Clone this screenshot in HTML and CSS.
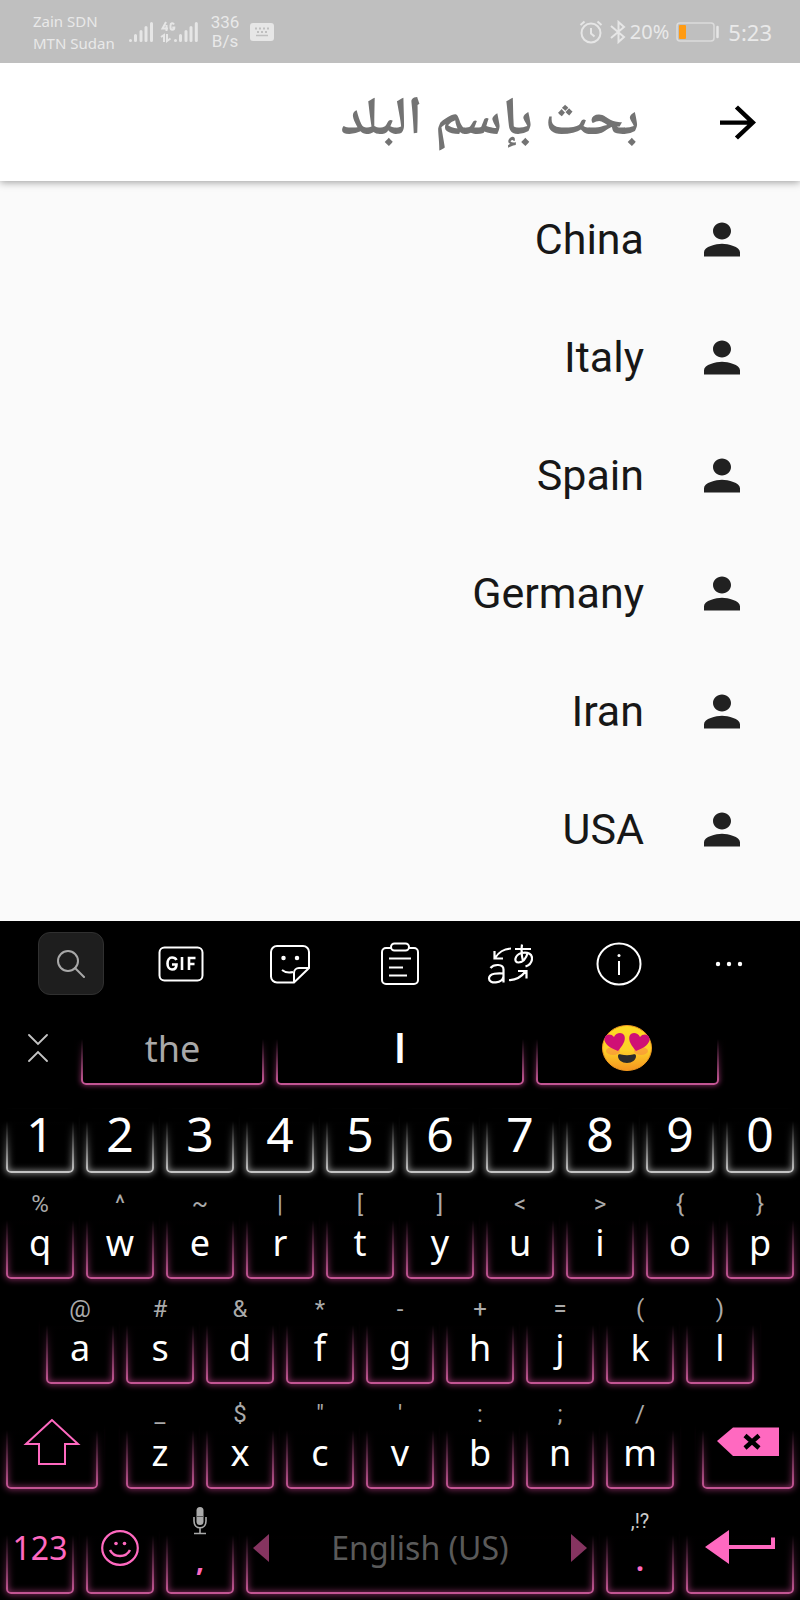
FILE: index.html
```html
<!DOCTYPE html>
<html lang="ar">
<head>
<meta charset="utf-8">
<meta name="viewport" content="width=device-width, initial-scale=1">
<title>بحث بإسم البلد</title>
<link rel="stylesheet" href="styles.css">
</head>
<body>
<svg class="defs" aria-hidden="true">
  <symbol id="person" viewBox="0 0 24 24" preserveAspectRatio="none"><path d="M12 12c2.21 0 4-1.79 4-4s-1.79-4-4-4-4 1.790-4 4 1.790 4 4 4zm0 2c-2.670 0-8 1.340-8 4v2h16v-2c0-2.660-5.330-4-8-4z"/></symbol>
</svg>
<div class="screen">
  <header class="status">
    <div class="carriers"><span>Zain SDN</span><span>MTN Sudan</span></div>
    <svg class="signals" width="70" height="24" viewBox="0 0 70 24" fill="none" stroke="#e6e6e6" stroke-width="3" stroke-linecap="round">
      <path d="M2.500 20.500v0M7.500 15.500v5M13 11.500v9M18 7.500v13M23.500 3.500v17M47.500 20.500v0M52.500 15.500v5M58 11.500v9M63 7.500v13M68.300 3.500v17"/>
      <path stroke-width="2" stroke-linecap="butt" d="M38 2l-3.500 6.500h5.500M38.500 5v6M46 4.500c-1-2-3.500-1.500-3.500 1v2c0 3 3.800 3 3.800 0h-2M33 17l3-2v7M39 14v7l3.500-2.500"/>
    </svg>
    <div class="speed"><span>336</span><span>B/s</span></div>
    <svg class="kbd" width="24" height="18" viewBox="0 0 24 18"><rect width="24" height="18" rx="3" fill="#e6e6e6"/><path d="M5 5.500h14M7 9h10" stroke="#bfbfbf" stroke-width="2" stroke-dasharray="2 2"/><path d="M6 12.500h12" stroke="#bfbfbf" stroke-width="1.500"/></svg>
    <div class="status-end">
      <svg width="24" height="24" viewBox="0 0 24 24" fill="none" stroke="#e6e6e6" stroke-width="2"><circle cx="12" cy="13" r="9.500"/><path d="M12 8v5.500l3.500 3M1.500 5l4-3.500M22.500 5l-4-3.500"/></svg>
      <svg class="bt" width="16" height="24" viewBox="0 0 16 24" fill="none" stroke="#e6e6e6" stroke-width="2"><path d="M1 6l13 11-5.500 5V2L14 7 1 18"/></svg>
      <span class="pct">20%</span>
      <svg class="battery" width="44" height="20" viewBox="0 0 44 20"><rect x="1" y="1" width="37" height="18" rx="3" fill="none" stroke="#dcdcdc" stroke-width="1.500"/><rect x="3" y="3" width="7" height="14" rx="1" fill="#ff9b13"/><path d="M41.500 5v10" stroke="#e6e6e6" stroke-width="2.500" stroke-linecap="round"/></svg>
      <span class="clock">5:23</span>
    </div>
  </header>

  <form class="appbar" dir="rtl" role="search">
    <button class="back" type="button" aria-label="رجوع"><svg class="icon" viewBox="0 0 24 24" preserveAspectRatio="none"><path d="M12 4l-1.410 1.410L16.170 11H4v2h12.170l-5.580 5.590L12 20l8-8z"/></svg></button>
    <input class="query" type="text" placeholder="بحث بإسم البلد" aria-label="بحث بإسم البلد">
  </form>

  <main class="results">
    <ul class="countries" dir="rtl">
      <li class="country"><svg class="icon"><use href="#person"/></svg><span>China</span></li>
      <li class="country"><svg class="icon"><use href="#person"/></svg><span>Italy</span></li>
      <li class="country"><svg class="icon"><use href="#person"/></svg><span>Spain</span></li>
      <li class="country"><svg class="icon"><use href="#person"/></svg><span>Germany</span></li>
      <li class="country"><svg class="icon"><use href="#person"/></svg><span>Iran</span></li>
      <li class="country"><svg class="icon"><use href="#person"/></svg><span>USA</span></li>
    </ul>
  </main>

  <section class="keyboard" lang="en" aria-label="Keyboard">
    <div class="tools">
      <button class="tool tool-search" type="button" aria-label="Search"><svg width="30" height="28" viewBox="0 0 30 28" fill="none" stroke="#a9a9a9" stroke-width="2" stroke-linecap="round"><circle cx="12" cy="11" r="10"/><path d="M19 18l9 9"/></svg></button>
      <button class="tool" type="button" aria-label="GIF"><svg width="46" height="36" viewBox="0 0 46 36" fill="none" stroke="#fff" stroke-width="2"><rect x="1.500" y="1.500" width="43" height="33" rx="5"/><path stroke-width="2.600" d="M18.500 14c-1-2-3-2.500-4.500-2.500-6 0-6 12 0 12 3 0 4.500-1.500 4.500-5h-4.500M24 11v13M31 24V12h6.500M31 18h5.500"/></svg></button>
      <button class="tool" type="button" aria-label="Stickers"><svg width="42" height="40" viewBox="0 0 42 40" fill="none" stroke="#fff" stroke-width="2"><path d="M25 38.500H8a6 6 0 0 1-6-6V8a6 6 0 0 1 6-6h26a6 6 0 0 1 6 6v16L25 38.500zM25 38V29a5 5 0 0 1 5-5h10M13 26c3 2.500 7 3 11 2"/><circle cx="14.500" cy="14" r="1.500" fill="#fff" stroke-width="1.500"/><circle cx="28" cy="14" r="1.500" fill="#fff" stroke-width="1.500"/></svg></button>
      <button class="tool" type="button" aria-label="Clipboard"><svg width="38" height="44" viewBox="0 0 38 44" fill="none" stroke="#fff" stroke-width="2"><path d="M10 6H5a4 4 0 0 0-4 4v28a4 4 0 0 0 4 4h28a4 4 0 0 0 4-4V10a4 4 0 0 0-4-4h-5"/><rect x="10" y="1.500" width="18" height="7" rx="3.500"/><path d="M8 16.500h22M8 25.500h14M8 33.500h18"/></svg></button>
      <button class="tool" type="button" aria-label="Translate"><svg width="46" height="42" viewBox="0 0 46 42" fill="none" stroke="#fff" stroke-width="2.200"><path d="M3.500 25c3-4 13-4.500 13 1.500v13M16.500 30.500c-5-.5-14.500-.5-14.500 5 0 6 13.500 5 14.500-2M7.500 8v7.500H16M8 15c4-6 8-9 16-9.500M22 37c8 .5 13-4 17-9M31 28h8.500v7.500M28 6h16M35 1.500c-1 7-.5 11 1 16.500M41 9c-2 7-6 10.500-9.500 10.500-5 0-4-7.500 3-9.500 6-1.500 11 1 10.500 6-.3 3.500-2.500 6-6.500 7.500"/></svg></button>
      <button class="tool" type="button" aria-label="Information"><svg width="46" height="44" viewBox="0 0 46 44" fill="none" stroke="#fff" stroke-width="2"><ellipse cx="23" cy="22" rx="21.500" ry="20.500"/><path d="M23 19v14"/><circle cx="23" cy="13.500" r="1.500" fill="#fff" stroke="none"/></svg></button>
      <button class="tool" type="button" aria-label="More"><svg width="28" height="8" viewBox="0 0 28 8" fill="#fff"><circle cx="3" cy="4" r="2.200"/><circle cx="14" cy="4" r="2.200"/><circle cx="25" cy="4" r="2.200"/></svg></button>
    </div>

    <div class="suggest">
      <button class="fold" type="button" aria-label="Collapse"><svg width="20" height="28" viewBox="0 0 20 28" fill="none" stroke="#c4c4c4" stroke-width="1.800" stroke-linecap="round"><path d="M1 1l9 9 9-9M1 27l9-9 9 9"/></svg></button>
      <button class="word" type="button">the</button>
      <button class="word word-main" type="button">I</button>
      <button class="word" type="button" aria-label="Heart eyes"><svg width="50" height="46" viewBox="0 0 50 46">
        <defs><linearGradient id="face" x1="0" y1="0" x2="0" y2="1"><stop offset="0" stop-color="#fdda24"/><stop offset=".55" stop-color="#fdd029"/><stop offset="1" stop-color="#f5941f"/></linearGradient></defs>
        <ellipse cx="25" cy="23" rx="24.500" ry="22.500" fill="url(#face)" stroke="#f29a20"/>
        <ellipse cx="11" cy="26" rx="7" ry="4" fill="#f8953a" opacity=".7"/><ellipse cx="39" cy="26" rx="7" ry="4" fill="#f8953a" opacity=".7"/>
        <path d="M16 26C8 23 2 19 2.500 13.500 3 9 9 8 12 12c2-5 9-5.500 10.500-1C24 16 20 21 16 26zM34 26c8-3 14-7 13.500-12.500C47 9 41 8 38 12c-2-5-9-5.500-10.500-1C26 16 30 21 34 26z" fill="#cf1075"/>
        <path d="M16 31c0-2 1.500-2 3-1.500 4 1 8 1 12 0 1.500-.5 3-.5 3 1.500 0 4-4 7-9 7s-9-3-9-7z" fill="#2b2b2b"/>
      </svg></button>
    </div>

    <div class="row row-digits">
      <button class="key" type="button">1</button><button class="key" type="button">2</button><button class="key" type="button">3</button><button class="key" type="button">4</button><button class="key" type="button">5</button><button class="key" type="button">6</button><button class="key" type="button">7</button><button class="key" type="button">8</button><button class="key" type="button">9</button><button class="key" type="button">0</button>
    </div>
    <div class="row row-top">
      <button class="key" type="button"><small>%</small>q</button>
      <button class="key" type="button"><small>^</small>w</button>
      <button class="key" type="button"><small>~</small>e</button>
      <button class="key" type="button"><small>|</small>r</button>
      <button class="key" type="button"><small>[</small>t</button>
      <button class="key" type="button"><small>]</small>y</button>
      <button class="key" type="button"><small>&lt;</small>u</button>
      <button class="key" type="button"><small>&gt;</small>i</button>
      <button class="key" type="button"><small>{</small>o</button>
      <button class="key" type="button"><small>}</small>p</button>
    </div>
    <div class="row row-home">
      <span></span>
      <button class="key" type="button"><small>@</small>a</button>
      <button class="key" type="button"><small>#</small>s</button>
      <button class="key" type="button"><small>&amp;</small>d</button>
      <button class="key" type="button"><small>*</small>f</button>
      <button class="key" type="button"><small>-</small>g</button>
      <button class="key" type="button"><small>+</small>h</button>
      <button class="key" type="button"><small>=</small>j</button>
      <button class="key" type="button"><small>(</small>k</button>
      <button class="key" type="button"><small>)</small>l</button>
    </div>
    <div class="row row-low">
      <button class="key key-art key-shift" type="button" aria-label="Shift"><svg width="58" height="48" viewBox="0 0 58 48" fill="none" stroke="#ff69c0" stroke-width="2"><path d="M29 2L3 26h13v20h26V26h13z"/></svg></button>
      <span></span>
      <button class="key" type="button"><small>_</small>z</button>
      <button class="key" type="button"><small>$</small>x</button>
      <button class="key" type="button"><small>"</small>c</button>
      <button class="key" type="button"><small>'</small>v</button>
      <button class="key" type="button"><small>:</small>b</button>
      <button class="key" type="button"><small>;</small>n</button>
      <button class="key" type="button"><small>/</small>m</button>
      <span></span>
      <button class="key key-art key-delete" type="button" aria-label="Backspace"><svg width="62" height="48" viewBox="0 0 62 48"><path d="M0 23L16 9.500h46v28.500H16z" fill="#ff69c0"/><path d="M28 17.500l14 12.500M42 17.500L28 30" stroke="#000" stroke-width="4.500"/></svg></button>
    </div>
    <div class="row row-space">
      <button class="key key-pink key-art" type="button">123</button>
      <button class="key key-art" type="button" aria-label="Emoji"><svg width="38" height="36" viewBox="0 0 38 36" fill="none" stroke="#ff69c0" stroke-width="2.200"><ellipse cx="19" cy="18" rx="17.800" ry="16.800"/><path d="M9 20c4 8 16 8 20 0" stroke-width="2.500"/><circle cx="15" cy="13.500" r="1.800" fill="#ff69c0" stroke="none"/><circle cx="23.500" cy="13.500" r="1.800" fill="#ff69c0" stroke="none"/></svg></button>
      <button class="key key-punct" type="button"><svg width="14" height="28" viewBox="0 0 14 28" aria-label="Voice"><rect x="3.500" y="0" width="7" height="18" rx="3.500" fill="#aaa"/><path d="M1 10v4c0 9 12 9 12 0v-4M7 21v5M1 26.500h12" fill="none" stroke="#aaa" stroke-width="1.600"/><path d="M3.500 9.500h7" stroke="#555"/></svg><b>,</b></button>
      <button class="key key-space" type="button"><svg width="16" height="28" viewBox="0 0 16 28"><path d="M16 0v28L0 14z" fill="#853460"/></svg><span>English (US)</span><svg width="16" height="28" viewBox="0 0 16 28"><path d="M0 0v28l16-14z" fill="#853460"/></svg></button>
      <button class="key key-punct" type="button"><small>,!?</small><b>.</b></button>
      <button class="key key-art key-enter" type="button" aria-label="Enter"><svg width="70" height="34" viewBox="0 0 70 34"><path d="M0 17L24 0v15h42V7.500h4V19H24v15z" fill="#ff69c0"/></svg></button>
    </div>
  </section>
</div>
</body>
</html>
```

FILE: styles.css
```css
* { box-sizing: border-box; }
body { margin: 0; background: #fafafa; font-family: Roboto, "Liberation Sans", sans-serif; }
button, input { font: inherit; color: inherit; border: 0; padding: 0; margin: 0; background: none; }
svg { display: block; flex: none; }
.defs { position: absolute; width: 0; height: 0; }
.screen { min-height: 100vh; display: flex; flex-direction: column; }
.icon { width: 54px; height: 51px; fill: #212121; }

/* Status bar */
.status { position: relative; z-index: 1; display: flex; align-items: center; height: 63px; padding: 0 28px 0 33px; background: #bfbfbf; color: #e9e9e9; }
.carriers { width: 95px; display: flex; flex-direction: column; padding-top: 1px; font: 15px/22px "Noto Sans", sans-serif; white-space: nowrap; }
.speed { margin-left: 12px; width: 30px; font-size: 17px; line-height: 19px; text-align: center; }
.speed span { display: block; }
.kbd { margin-left: 10px; }
.status-end { margin-left: auto; display: flex; align-items: center; font: 22px/30px "Noto Sans", sans-serif; }
.bt { margin: 0 4px 0 7px; }
.battery { margin: 0 8px 0 7px; }
.pct { font-size: 20px; }

/* Search bar */
.appbar { position: relative; display: flex; align-items: center; height: 118px; padding: 0 35px; background: #fff; box-shadow: 0 1px 8px rgba(0, 0, 0, .4); }
.back .icon { fill: #000; }
.query { flex: 1; min-width: 0; height: 80px; margin-right: 72px; font: 700 54px/80px "Noto Naskh Arabic", "DejaVu Sans", sans-serif; outline: 0; }
.query::placeholder { color: #737373; opacity: 1; }

/* Country list */
.results { flex: 1; }
.countries { list-style: none; margin: 0; padding: 0; }
.country { display: flex; align-items: center; gap: 51px; height: 118px; padding: 0 51px 2px; font-size: 43px; color: #171717; }

/* Keyboard */
.keyboard { background: #000; color: #fff; font-family: "Noto Sans", sans-serif; }
.tools { display: grid; grid-template-columns: repeat(7, 1fr); align-items: center; height: 85px; padding: 0 16px; }
.tool { display: flex; align-items: center; justify-content: center; justify-self: center; width: 66px; height: 63px; }
.tool-search { background: #1e1e1e; border: 1px solid #303030; border-radius: 12px; }
.suggest { display: grid; grid-template-columns: 75px 195fr 259fr 195fr; height: 84px; padding-right: 75px; }
.fold { display: flex; align-items: center; justify-content: center; }
.word { display: flex; align-items: center; justify-content: center; font-size: 36px; color: #a9a9a9; }
.word-main { font: 500 42px Roboto, sans-serif; color: #fff; }

.row { display: grid; height: 105px; }
.row-digits { grid-template-columns: repeat(10, 1fr); height: 90px; }
.row-top { grid-template-columns: repeat(10, 1fr); }
.row-home { grid-template-columns: 40fr repeat(9, 80fr) 40fr; }
.row-low { grid-template-columns: 104fr 16fr repeat(7, 80fr) 16fr 104fr; }
.row-space { grid-template-columns: repeat(3, 80fr) 360fr 80fr 120fr; }

.key { display: flex; flex-direction: column; align-items: center; padding-top: 10px; font-size: 36px; line-height: 50px; min-width: 0; }
.key small { font-family: Roboto, sans-serif; font-size: 24px; line-height: 28px; height: 28px; color: #aaa; }
.row-digits .key { font-size: 48px; line-height: 60px; padding-top: 14px; }

/* Neon frame under each key, fading out toward the top */
.key, .word { position: relative; isolation: isolate; --line: #c25593; --glow: rgba(207, 70, 150, .55); }
.row-digits .key { --line: #c4c4c4; --glow: rgba(210, 210, 210, .6); }
.key::before, .word::before { content: ""; position: absolute; z-index: -2; inset: 36px 6px 6px; border: 2px solid var(--line); border-radius: 5px; box-shadow: 0 0 6px 1px var(--glow), inset 0 0 6px 1px var(--glow); }
.key::after, .word::after { content: ""; position: absolute; z-index: -1; inset: 28px 0 9px; background: linear-gradient(#000 12px, transparent); }
.row-digits .key::before { top: 26px; bottom: 7px; }
.row-digits .key::after { top: 19px; }
.word::before { top: 28px; bottom: 5px; box-shadow: 0 0 5px 1px var(--glow); }
.word::after { top: 21px; }

.row .key-art { justify-content: center; padding: 0; }
.key-pink { color: #ff69c0; font-size: 32px; }
.row .key-shift { padding-bottom: 2px; }
.row .key-delete { align-items: flex-end; padding: 0 21px 2px 0; }
.row .key-enter { padding-bottom: 2px; }
.key-punct { justify-content: space-between; padding: 12px 0 22px; }
.key-punct small { font-size: 20px; color: #ccc; }
.key-punct b { color: #ff69c0; line-height: 36px; font-size: 28px; }
.key-space { flex-direction: row; justify-content: space-between; padding: 0 13px; font-size: 32px; color: #5a5a5a; }
```
